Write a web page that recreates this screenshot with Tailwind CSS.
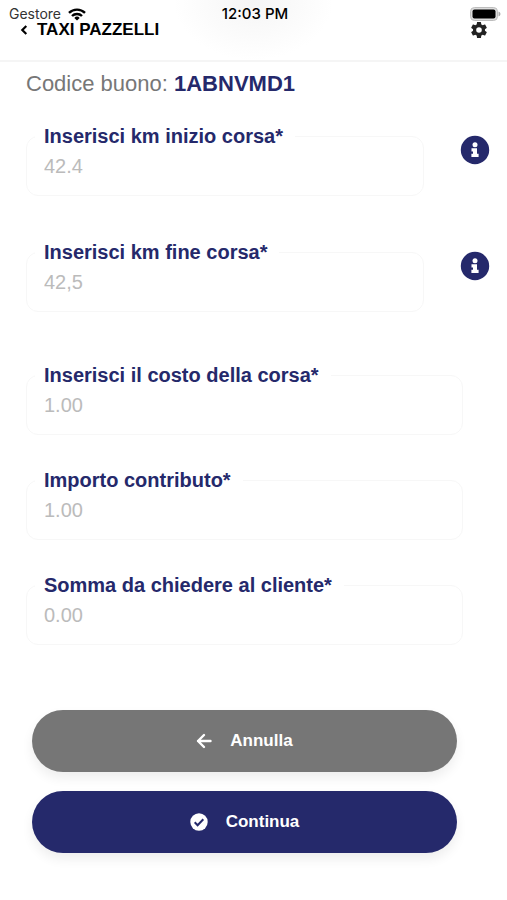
<!DOCTYPE html>
<html lang="it">
<head>
    <meta charset="UTF-8">
    <meta name="viewport" content="width=device-width, initial-scale=1.0">
    <title>Taxi Pazzelli</title>
    <script src="https://cdn.jsdelivr.net/npm/@tailwindcss/browser@4"></script>
</head>
<body class="bg-white font-['Liberation_Sans',Arial,sans-serif] text-[#25296b]">
    <header class="border-b-2 border-[#f5f5f5] pb-[22px] text-black bg-[radial-gradient(ellipse_80px_60px_at_50%_0,#f5f5f5,#ffffff)]">
        <!-- Status bar -->
        <div class="grid grid-cols-3 items-center pt-[6px] pl-[9px] pr-[6px] font-['Inter',sans-serif] text-sm leading-4">
            <div class="flex items-center gap-[7px] text-[#333]">
                <span>Gestore</span>
                <svg class="w-[18px] h-[13px] text-black" viewBox="0 0 18 13" fill="none" stroke="currentColor" stroke-width="2.4" aria-hidden="true">
                    <path d="M1 4.9a11.4 11.4 0 0 1 16 0M4 8a7.1 7.1 0 0 1 10 0"/>
                    <path d="M9 12.6 6.3 9.9a3.9 3.9 0 0 1 5.4 0z" fill="currentColor" stroke="none"/>
                </svg>
            </div>
            <div class="text-center text-[15px] leading-4 font-medium">12:03 PM</div>
            <svg class="justify-self-end w-[31px] h-[14px]" viewBox="0 0 31 14" aria-hidden="true">
                <rect x="0.5" y="0.5" width="27" height="13" rx="4" fill="#dcdcdc" stroke="#bdbdbd"/>
                <rect x="2.5" y="2.5" width="23" height="9" rx="2" fill="#000"/>
                <path d="M28.500 4.500c2.600 1 2.600 4 0 5z" fill="#aaa"/>
            </svg>
        </div>
        <div class="flex items-center justify-between h-4 px-5">
            <button type="button" class="flex items-center gap-[9px] text-[17px] leading-4 font-bold">
                <svg class="w-2 h-3" viewBox="0 0 8 12" fill="none" stroke="currentColor" stroke-width="2.2" aria-hidden="true">
                    <path d="M6.3 2 2.300 6l4 4"/>
                </svg>
                TAXI PAZZELLI
            </button>
            <button type="button" aria-label="Impostazioni">
                <svg class="w-4 h-4" viewBox="2 2 20 20" fill="#222" aria-hidden="true">
                    <path d="M19.43 12.98c.04-.32.07-.64.07-.98s-.03-.66-.07-.98l2.11-1.65c.19-.15.24-.42.12-.64l-2-3.46c-.12-.22-.39-.3-.61-.22l-2.49 1c-.52-.4-1.08-.73-1.69-.98l-.38-2.65A.49.49 0 0 0 14 2h-4c-.25 0-.46.18-.49.42l-.38 2.65c-.61.25-1.17.59-1.69.98l-2.49-1c-.23-.09-.49 0-.61.22l-2 3.46c-.13.22-.07.49.12.64l2.11 1.65c-.04.32-.07.65-.07.98s.03.66.07.98l-2.11 1.65c-.19.15-.24.42-.12.64l2 3.46c.12.22.39.3.61.22l2.49-1c.52.4 1.08.73 1.69.98l.38 2.65c.03.24.24.42.49.42h4c.25 0 .46-.18.49-.42l.38-2.65c.61-.25 1.17-.59 1.69-.98l2.49 1c.23.09.49 0 .61-.22l2-3.46c.12-.22.07-.49-.12-.64zM12 15.5A3.5 3.5 0 1 1 12 8.500a3.500 3.500 0 0 1 0 7z"/>
                </svg>
            </button>
        </div>
    </header>

    <main>
        <p class="pt-2 pl-[26px] text-[22px] leading-7 text-[#777]">Codice buono: <strong class="text-[#25296b]">1ABNVMD1</strong></p>

        <form class="pt-7 pl-[26px]">
            <!-- Km con pulsante info -->
            <div class="flex items-start justify-between pr-[17px]">
                <fieldset class="grow mr-9 h-[70px] px-2 border border-[#f7f7f7] rounded-xl">
                    <legend class="pl-[9px] pr-3 text-xl leading-5 font-bold"><label for="kmInizio">Inserisci km inizio corsa*</label></legend>
                    <input id="kmInizio" type="text" placeholder="42.4" class="block w-full h-10 px-[9px] text-xl outline-none placeholder:text-[#bbb]">
                </fieldset>
                <button type="button" aria-label="Info km inizio" class="mt-[9px]">
                    <svg class="w-[30px] h-[30px]" viewBox="0 0 30 30" aria-hidden="true">
                        <circle cx="15" cy="15" r="14.200" fill="#25296b"/>
                        <circle cx="15" cy="9.800" r="2.500" fill="#fff"/>
                        <path d="M11.500 13.300h5.500v5.500h1.600v3.200h-7.200v-3.200h1.600v-2.300h-1.500z" fill="#fff"/>
                    </svg>
                </button>
            </div>
            <div class="flex items-start justify-between mt-[46px] pr-[17px]">
                <fieldset class="grow mr-9 h-[70px] px-2 border border-[#f7f7f7] rounded-xl">
                    <legend class="pl-[9px] pr-3 text-xl leading-5 font-bold"><label for="kmFine">Inserisci km fine corsa*</label></legend>
                    <input id="kmFine" type="text" placeholder="42,5" class="block w-full h-10 px-[9px] text-xl outline-none placeholder:text-[#bbb]">
                </fieldset>
                <button type="button" aria-label="Info km fine" class="mt-[9px]">
                    <svg class="w-[30px] h-[30px]" viewBox="0 0 30 30" aria-hidden="true">
                        <circle cx="15" cy="15" r="14.200" fill="#25296b"/>
                        <circle cx="15" cy="9.800" r="2.500" fill="#fff"/>
                        <path d="M11.500 13.300h5.500v5.500h1.600v3.200h-7.200v-3.200h1.600v-2.300h-1.500z" fill="#fff"/>
                    </svg>
                </button>
            </div>

            <!-- Importi -->
            <div class="flex flex-col gap-[35px] mt-[53px] pr-11">
                <fieldset class="h-[70px] px-2 border border-[#f7f7f7] rounded-xl">
                    <legend class="pl-[9px] pr-3 text-xl leading-5 font-bold"><label for="costo">Inserisci il costo della corsa*</label></legend>
                    <input id="costo" type="text" placeholder="1.00" class="block w-full h-10 px-[9px] text-xl outline-none placeholder:text-[#bbb]">
                </fieldset>
                <fieldset class="h-[70px] px-2 border border-[#f7f7f7] rounded-xl">
                    <legend class="pl-[9px] pr-3 text-xl leading-5 font-bold"><label for="contributo">Importo contributo*</label></legend>
                    <input id="contributo" type="text" placeholder="1.00" class="block w-full h-10 px-[9px] text-xl outline-none placeholder:text-[#bbb]">
                </fieldset>
                <fieldset class="h-[70px] px-2 border border-[#f7f7f7] rounded-xl">
                    <legend class="pl-[9px] pr-3 text-xl leading-5 font-bold"><label for="somma">Somma da chiedere al cliente*</label></legend>
                    <input id="somma" type="text" placeholder="0.00" class="block w-full h-10 px-[9px] text-xl outline-none placeholder:text-[#bbb]">
                </fieldset>
            </div>

            <div class="flex flex-col gap-[19px] mt-[65px] pl-[6px] pr-[50px] pb-12 text-[17px] font-bold text-white">
                <button type="button" class="flex items-center justify-center gap-[18px] h-[62px] rounded-full bg-[#767676] shadow-[0_6px_12px_rgba(0,0,0,0.07)]">
                    <svg class="w-4 h-4" viewBox="0 0 16 16" fill="none" stroke="currentColor" stroke-width="2.400" stroke-linecap="round" stroke-linejoin="round" aria-hidden="true">
                        <path d="M14.500 8H2M8 2 2 8l6 6"/>
                    </svg>
                    Annulla
                </button>
                <button type="submit" class="flex items-center justify-center gap-[18px] h-[62px] rounded-full bg-[#25296b] shadow-[0_6px_12px_rgba(0,0,0,0.07)]">
                    <svg class="w-[18px] h-[18px]" viewBox="0 0 18 18" aria-hidden="true">
                        <circle cx="9" cy="9" r="8.700" fill="#fff"/>
                        <path d="m4.700 9.300 2.900 2.900 5.700-5.900" fill="none" stroke="#25296b" stroke-width="2"/>
                    </svg>
                    Continua
                </button>
            </div>
        </form>
    </main>
</body>
</html>
